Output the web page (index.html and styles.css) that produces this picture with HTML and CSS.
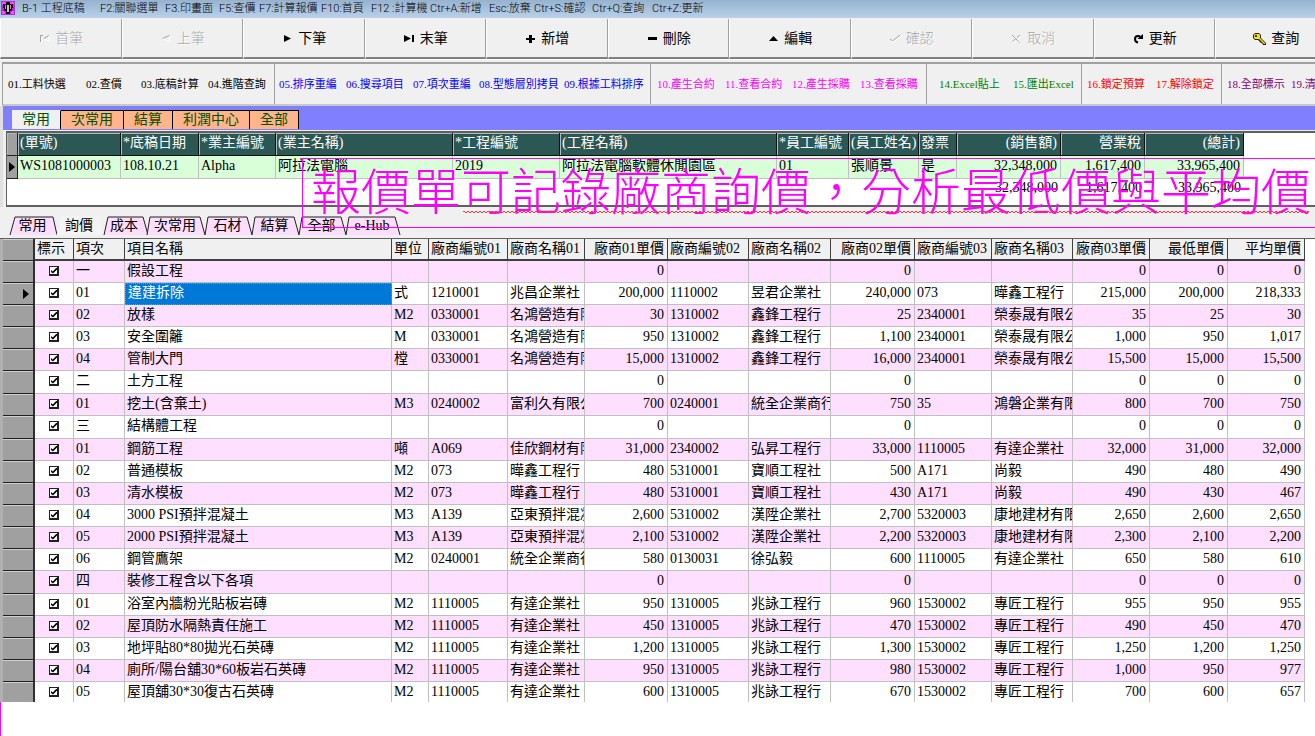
FILE: index.html
```html
<!DOCTYPE html>
<html lang="zh-Hant">
<head>
<meta charset="utf-8">
<title>B-1 工程底稿</title>
<link rel="stylesheet" href="styles.css">
</head>
<body>
<div class="app">
  <header class="titlebar">
    <svg class="app-icon" viewBox="0 0 14 14"><rect width="14" height="14" fill="#b030d8"/><path d="M1 1h4v3H1zM9 1h4v3H9zM1 10h3v3H1zM10 10h3v3h-3z" fill="#f050ff"/><path d="M5 1h4v2h3v4h-1v3H9v3H5v-3H3V7H2V3h3z" fill="#180820"/><path d="M4 4h1v4H4zM9 4h1v4H9z" fill="#d8a030"/><path d="M6 4h2v7H6z" fill="#c8c0c8"/></svg>
    <div class="title-text">
      <span>B-1 工程底稿</span><span>F2:關聯選單</span><span>F3.印畫面</span><span>F5:查價</span><span>F7:計算報價</span><span>F10:首頁</span><span>F12 :計算機</span><span>Ctr+A:新增</span><span>Esc:放棄</span><span>Ctr+S:確認</span><span>Ctr+Q:查詢</span><span>Ctr+Z:更新</span>
    </div>
  </header>

  <nav class="toolbar">
    <button disabled><svg class="ico" viewBox="0 0 12 12"><path d="M2.500 9V2.500H5M11 2.500L5.500 5.500" stroke="#a0a0a0" fill="none"/><path d="M3.500 9V3.500M5.500 6L11 8.500V3" stroke="#fff" fill="none"/></svg>首筆</button>
    <button disabled><svg class="ico" viewBox="0 0 12 12"><path d="M9.500 2.500L2.500 5.500" stroke="#a0a0a0" fill="none"/><path d="M3 6L9.500 9V3" stroke="#fff" fill="none"/></svg>上筆</button>
    <button><svg class="ico" viewBox="0 0 12 12"><path d="M3 2L10 5.500L3 9z"/></svg>下筆</button>
    <button><svg class="ico" viewBox="0 0 12 12"><path d="M1 2L8 5.500L1 9zM9 2h2v7H9z"/></svg>末筆</button>
    <button><svg class="ico" viewBox="0 0 12 12"><path d="M5 2h3v3h3v2H8v3H5V7H2V5h3z"/></svg>新增</button>
    <button><svg class="ico" viewBox="0 0 12 12"><path d="M2 4h9v3H2z"/></svg>刪除</button>
    <button><svg class="ico" viewBox="0 0 12 12"><path d="M6.500 3L11 8H2z"/></svg>編輯</button>
    <button disabled><svg class="ico" viewBox="0 0 12 12"><path d="M1 6L3.500 8L11 2" stroke="#a0a0a0" fill="none"/><path d="M2 8L4 9L12 3" stroke="#fff" fill="none"/></svg>確認</button>
    <button disabled><svg class="ico" viewBox="0 0 12 12"><path d="M3 3L11 11M11 3L3 10" stroke="#fff" fill="none"/><path d="M2 2L10 10M10 2L2 9" stroke="#a0a0a0" stroke-dasharray="4 1" fill="none"/></svg>取消</button>
    <button><svg class="ico" viewBox="0 0 12 12"><path d="M6 9.500C2 8.500 2 3 6 3C8 3 9 4 9 5.500" stroke="#000" stroke-width="2" fill="none"/><path d="M5.500 6H11V1z"/></svg>更新</button>
    <button><svg class="ico key" viewBox="0 0 14 14"><path d="M3 1h4l2 2v3l5 5v2h-3l-1-2H9L6 8H3L1 6V3z" fill="#222"/><path d="M3 2h4l1 1v3l5 5v1h-1L7 7H3L2 6V3z" fill="#f2e600"/><path d="M3 3h2v2H3z" fill="#333"/></svg>查詢</button>
  </nav>

  <nav class="linkbar">
    <div class="group g1"><a href="#">01.工料快選</a><a href="#">02.查價</a><a href="#">03.底稿計算</a><a href="#">04.進階查詢</a></div>
    <div class="group g2"><a href="#">05.排序重編</a><a href="#">06.搜尋項目</a><a href="#">07.項次重編</a><a href="#">08.型態層別拷貝</a><a href="#">09.根據工料排序</a></div>
    <div class="group g3"><a href="#">10.產生合約</a><a href="#">11.查看合約</a><a href="#">12.產生採購</a><a href="#">13.查看採購</a></div>
    <div class="group g4"><a href="#">14.Excel貼上</a><a href="#">15.匯出Excel</a></div>
    <div class="group g5"><a href="#">16.鎖定預算</a><a href="#">17.解除鎖定</a></div>
    <div class="group g6"><a href="#">18.全部標示</a><a href="#">19.清除標示</a></div>
  </nav>

  <section class="master">
    <div class="tabs">
      <button class="on">常用</button><button>次常用</button><button>結算</button><button>利潤中心</button><button>全部</button>
    </div>
    <div class="master-box">
      <table class="master-table">
        <colgroup><col class="m0"><col class="m1"><col class="m2"><col class="m3"><col class="m4"><col class="m5"><col><col class="m7"><col class="m8"><col class="m9"><col class="m10"><col class="m11"><col class="m12"></colgroup>
        <thead><tr><th class="sel"></th><th>(單號)</th><th>*底稿日期</th><th>*業主編號</th><th>(業主名稱)</th><th>*工程編號</th><th>(工程名稱)</th><th>*員工編號</th><th>(員工姓名)</th><th>發票</th><th class="num">(銷售額)</th><th class="num">營業稅</th><th class="num">(總計)</th></tr></thead>
        <tbody>
          <tr class="rec"><td class="sel"><svg class="cur" viewBox="0 0 6 10"><path d="M0 0L6 5L0 10z"/></svg></td><td>WS1081000003</td><td>108.10.21</td><td>Alpha</td><td>阿拉法電腦</td><td>2019</td><td>阿拉法電腦軟體休閒園區</td><td>01</td><td>張順景</td><td>是</td><td class="num">32,348,000</td><td class="num">1,617,400</td><td class="num">33,965,400</td></tr>
          <tr class="sum"><td colspan="10"></td><td class="num">32,348,000</td><td class="num">1,617,400</td><td class="num">33,965,400</td></tr>
        </tbody>
      </table>
    </div>
    <div class="banner">報價單可記錄廠商詢價，分析最低價與平均價<span class="squiggle"></span></div>
  </section>

  <div class="subtabs">
    <button class="w47"><svg viewBox="0 0 47 19" preserveAspectRatio="none"><path d="M0 19L5 1H43L47 19"/></svg><span>常用</span></button>
    <button class="w46 on"><svg viewBox="0 0 46 19" preserveAspectRatio="none"><path d="M0 19L5 1H42L47 19"/></svg><span>詢價</span></button>
    <button class="w44"><svg viewBox="0 0 44 19" preserveAspectRatio="none"><path d="M1 19L5 1H40L45 19"/></svg><span>成本</span></button>
    <button class="w58"><svg viewBox="0 0 58 19" preserveAspectRatio="none"><path d="M0 19L3 1H53L58 19"/></svg><span>次常用</span></button>
    <button class="w47"><svg viewBox="0 0 47 19" preserveAspectRatio="none"><path d="M0 19L3 1H42L47 19"/></svg><span>石材</span></button>
    <button class="w47"><svg viewBox="0 0 47 19" preserveAspectRatio="none"><path d="M0 19L3 1H42L47 19"/></svg><span>結算</span></button>
    <button class="w47"><svg viewBox="0 0 47 19" preserveAspectRatio="none"><path d="M0 19L3 1H42L47 19"/></svg><span>全部</span></button>
    <button class="w54"><svg viewBox="0 0 54 19" preserveAspectRatio="none"><path d="M0 19L3 1H49L54 19"/></svg><span>e-Hub</span></button>
  </div>

  <main class="detail">
    <table class="grid">
      <colgroup><col class="d0"><col class="d1"><col class="d2"><col><col class="d4"><col class="d5"><col class="d6"><col class="d7"><col class="d8"><col class="d9"><col class="d10"><col class="d11"><col class="d12"><col class="d13"><col class="d14"><col class="d15"></colgroup>
      <thead><tr><th class="sel"></th><th>標示</th><th>項次</th><th>項目名稱</th><th>單位</th><th>廠商編號01</th><th>廠商名稱01</th><th class="num">廠商01單價</th><th>廠商編號02</th><th>廠商名稱02</th><th class="num">廠商02單價</th><th>廠商編號03</th><th>廠商名稱03</th><th class="num">廠商03單價</th><th class="num">最低單價</th><th class="num">平均單價</th></tr></thead>
      <tbody id="rows"></tbody>
    </table>
  </main>
  <footer class="blank"></footer>
</div>
<script src="rows.js"></script>
</body>
</html>
```
FILE: rows.js
```js
// One line per item: no|name|unit|code1|name1|price1|code2|name2|price2|code3|name3|price3|lowest|average
const data = `
一|假設工程
01|違建拆除|式|1210001|兆昌企業社|200,000|1110002|昱君企業社|240,000|073|曄鑫工程行|215,000|200,000|218,333
02|放樣|M2|0330001|名鴻營造有限公司|30|1310002|鑫鋒工程行|25|2340001|榮泰晟有限公司|35|25|30
03|安全圍籬|M|0330001|名鴻營造有限公司|950|1310002|鑫鋒工程行|1,100|2340001|榮泰晟有限公司|1,000|950|1,017
04|管制大門|樘|0330001|名鴻營造有限公司|15,000|1310002|鑫鋒工程行|16,000|2340001|榮泰晟有限公司|15,500|15,000|15,500
二|土方工程
01|挖土(含棄土)|M3|0240002|富利久有限公司|700|0240001|統全企業商行|750|35|鴻磐企業有限公司|800|700|750
三|結構體工程
01|鋼筋工程|噸|A069|佳欣鋼材有限公司|31,000|2340002|弘昇工程行|33,000|1110005|有達企業社|32,000|31,000|32,000
02|普通模板|M2|073|曄鑫工程行|480|5310001|寶順工程社|500|A171|尚毅|490|480|490
03|清水模板|M2|073|曄鑫工程行|480|5310001|寶順工程社|430|A171|尚毅|490|430|467
04|3000 PSI預拌混凝土|M3|A139|亞東預拌混凝土|2,600|5310002|漢陞企業社|2,700|5320003|康地建材有限公司|2,650|2,600|2,650
05|2000 PSI預拌混凝土|M3|A139|亞東預拌混凝土|2,100|5310002|漢陞企業社|2,200|5320003|康地建材有限公司|2,300|2,100|2,200
06|鋼管鷹架|M2|0240001|統全企業商行|580|0130031|徐弘毅|600|1110005|有達企業社|650|580|610
四|裝修工程含以下各項
01|浴室內牆粉光貼板岩磚|M2|1110005|有達企業社|950|1310005|兆詠工程行|960|1530002|專匠工程行|955|950|955
02|屋頂防水隔熱責任施工|M2|1110005|有達企業社|450|1310005|兆詠工程行|470|1530002|專匠工程行|490|450|470
03|地坪貼80*80拋光石英磚|M2|1110005|有達企業社|1,200|1310005|兆詠工程行|1,300|1530002|專匠工程行|1,250|1,200|1,250
04|廁所/陽台舖30*60板岩石英磚|M2|1110005|有達企業社|950|1310005|兆詠工程行|980|1530002|專匠工程行|1,000|950|977
05|屋頂舖30*30復古石英磚|M2|1110005|有達企業社|600|1310005|兆詠工程行|670|1530002|專匠工程行|700|600|657
`.trim().split("\n").map(line => line.split("|"));

const priceColumns = [5, 8, 11, 12, 13];
const current = 1;

document.getElementById("rows").innerHTML = data.map((item, r) => {
  const heading = item.length === 2;
  let cells = "";
  for (let c = 0; c < 14; c++) {
    const price = priceColumns.includes(c);
    const text = item[c] || (price ? "0" : "");
    const cls = price ? ' class="num"' : c === 1 && r === current ? ' class="picked"' : "";
    cells += `<td${cls}>${text}</td>`;
  }
  const cursor = r === current ? '<svg class="cur" viewBox="0 0 6 10"><path d="M0 0L6 5L0 10z"/></svg>' : "";
  return `<tr${heading ? ' class="heading"' : ""}><td class="sel">${cursor}</td>` +
    `<td class="mark"><input type="checkbox" checked aria-label="標示 ${item[1]}"></td>${cells}</tr>`;
}).join("");
```
FILE: styles.css
```css
* { box-sizing: border-box; }

body {
  margin: 0;
  background: #f0f0f0;
  color: #000;
  font: 14px/20px "Liberation Serif", "Noto Sans CJK TC", serif;
}

button { font: inherit; color: inherit; border: 0; padding: 0; background: none; }
a { color: inherit; text-decoration: none; }

.app { display: flex; flex-direction: column; height: 100vh; overflow: hidden; }

/* title bar */
.titlebar {
  flex: none;
  display: flex;
  gap: 7px;
  height: 18px;
  padding: 1px;
  background: linear-gradient(#97b2cf, #b9d1ea);
  font: 11px/16px Roboto, "Noto Sans CJK TC", sans-serif;
  font-weight: 300;
}
.app-icon { width: 14px; height: 14px; }
.title-text {
  display: grid;
  grid-template-columns: 78px 65px 54px 40px 62px 50px 59px 59px 45px 58px 60px 60px;
  white-space: nowrap;
}

/* record toolbar */
.toolbar {
  flex: none;
  display: flex;
  height: 42px;
  padding-top: 1px;
  border-bottom: 1px solid #fff;
  overflow: hidden;
}
.toolbar button {
  flex: 0 0 9.24%;
  display: flex;
  align-items: center;
  justify-content: center;
  gap: 5px;
  padding-top: 2px;
  border-right: 1px solid #a0a0a0;
  border-bottom: 2px solid #808080;
  border-left: 1px solid #fff;
}
.toolbar button:disabled { color: #a8a8a8; text-shadow: 1px 1px #fff; font-weight: 300; }
.ico { width: 12px; height: 12px; }
.ico.key { width: 14px; height: 14px; }

/* function links */
.linkbar {
  flex: none;
  display: flex;
  height: 44px;
  margin: 2px 0 0 2px;
  border-top: 2px solid #a0a0a0;
  border-left: 1px solid #a0a0a0;
  border-bottom: 2px solid #c8c8c8;
  font-size: 11px;
  overflow: hidden;
}
.group {
  flex: none;
  display: grid;
  align-items: center;
  padding-left: 5px;
  border-right: 1px solid #a0a0a0;
  white-space: nowrap;
}
.g1 { width: 272px; grid-template-columns: 78px 55px 67px 62px; }
.g2 { width: 376px; padding-left: 4px; grid-template-columns: 67px 67px 66px 85px 82px; color: #00f; }
.g3 { width: 276px; padding-left: 6px; grid-template-columns: 68px 67px 68px 60px; color: #f0f; }
.g4 { width: 155px; padding-left: 12px; grid-template-columns: 74px 62px; color: #008000; }
.g5 { width: 140px; grid-template-columns: 69px 62px; color: #f00; }
.g6 { grid-template-columns: 64px 62px; color: #800080; }

/* master record */
.master { flex: none; position: relative; border-left: 3px solid #e0e0e0; }
.tabs {
  display: flex;
  align-items: flex-end;
  height: 24px;
  padding: 0 9px 1px;
  background: #8080ff;
  color: #005000;
}
.tabs button {
  height: 19px;
  padding: 0 10px;
  background: #ffb48c;
  border: 1px solid #000;
  border-left: 0;
  border-bottom: 0;
  line-height: 18px;
}
.tabs button.on { background: #f0f0f0; border-top-color: #f0f0f0; }

.master-box {
  height: 76px;
  margin: 1px 0 0 3px;
  border: solid #606060;
  border-width: 2px 0 2px 1px;
  background: #fff;
}
table { border-collapse: separate; border-spacing: 0; table-layout: fixed; }
th, td { padding: 0 2px; text-align: left; white-space: nowrap; overflow: hidden; font-weight: inherit; }
th.num, td.num { text-align: right; padding-right: 3px; }

.master-table { width: calc(100% - 71px); }
.m0 { width: 11px; } .m1 { width: 103px; } .m2 { width: 78px; } .m3 { width: 77px; }
.m4 { width: 177px; } .m5 { width: 107px; } .m7 { width: 72px; } .m8 { width: 70px; }
.m9 { width: 38px; } .m10 { width: 104px; } .m11 { width: 84px; } .m12 { width: 99px; }
.master-table th {
  height: 23px;
  background: #2b5755;
  color: #fff;
  border: solid #101010;
  border-width: 0 1px 1px 0;
  box-shadow: inset 1px 1px #b0bcbc;
  line-height: 20px;
  vertical-align: top;
}
.rec td { height: 23px; background: #d8ffd8; border: solid #c0c0c0; border-width: 0 1px 1px 0; line-height: 20px; vertical-align: top; }
.sum td { height: 20px; line-height: 17px; vertical-align: top; }
.master-table th.sel, .rec td.sel { padding: 0; background: #a0a0a0; border-color: #202020; }
.cur { display: block; width: 6px; height: 10px; margin: 6px 2px 0 auto; }

/* announcement laid over both tables */
.banner {
  position: absolute;
  z-index: 2;
  top: 52px;
  left: 299px;
  right: -2px;
  height: 70px;
  padding-left: 8px;
  border: 1px solid #f0f;
  color: #f0f;
  font-size: 50px;
  font-weight: 300;
  line-height: 68px;
  white-space: nowrap;
  pointer-events: none;
}
.squiggle {
  position: absolute;
  left: 160px;
  right: 7px;
  bottom: 14px;
  height: 2px;
  background:
    repeating-linear-gradient(90deg, #f33 0 2px, transparent 2px 4px) 0 0 / 100% 1px no-repeat,
    repeating-linear-gradient(90deg, transparent 0 2px, #f33 2px 4px) 0 1px / 100% 1px no-repeat;
}

/* detail tabs */
.subtabs { flex: none; display: flex; height: 31px; padding: 9px 0 3px 10px; }
.subtabs button { position: relative; height: 19px; padding-right: 2px; line-height: 20px; }
.subtabs svg { position: absolute; inset: 0; width: 100%; height: 100%; overflow: visible; }
.subtabs path { fill: #ffddff; stroke: #202020; }
.subtabs .on path { fill: #f4f4f4; stroke: #f4f4f4; }
.subtabs span { position: relative; }
.w44 { width: 44px; } .w46 { width: 46px; } .w47 { width: 47px; } .w54 { width: 54px; } .w58 { width: 58px; }

/* detail grid */
.detail {
  flex: 1;
  min-height: 0;
  padding-left: 3px;
  border-top: 1px solid #606060;
  background: linear-gradient(90deg, #b0b0b0 3px, #fff 3px);
  overflow: hidden;
}
.grid { width: calc(100% - 10px); }
.d0 { width: 32px; } .d1 { width: 39px; } .d2 { width: 51px; } .d4 { width: 37px; }
.d5 { width: 79px; } .d6 { width: 77px; } .d7 { width: 83px; } .d8 { width: 81px; }
.d9 { width: 82px; } .d10 { width: 84px; } .d11 { width: 77px; } .d12 { width: 81px; }
.d13 { width: 77px; } .d14 { width: 78px; } .d15 { width: 77px; }
.grid th {
  height: 22px;
  background: #f0f0f0;
  border: solid #404040;
  border-width: 0 1px 2px 0;
  line-height: 20px;
}
.grid td {
  height: 22px;
  border: solid #c0c0c0;
  border-width: 0 1px 1px 0;
  line-height: 19px;
  vertical-align: top;
}
.grid tr + .heading td { height: 23px; }
.grid tbody tr { background: #fff; }
.grid tbody tr:nth-child(odd) { background: #ffdfff; }
.grid .sel { background: #a0a0a0; border-right: 2px solid #303030; border-bottom: 1px solid #202020; box-shadow: inset 0 1px #d0d0d0; }
.grid td.picked { background: #0078d7; color: #fff; border: 1px dotted #e08030; line-height: 18px; }
.mark input {
  appearance: none;
  display: block;
  width: 10px;
  height: 10px;
  margin: 5px auto 0;
  border: 1px solid #202020;
  border-right-width: 2px;
  border-bottom-width: 2px;
  background: #fff;
}
.mark input::after {
  content: "";
  display: block;
  width: 7px;
  height: 7px;
  background: #000;
  clip-path: polygon(14% 43%, 40% 65%, 86% 14%, 100% 14%, 100% 36%, 43% 92%, 14% 70%);
}

.blank { flex: none; height: 34px; background: #fff; border-left: 1px solid #f0f; }
```
